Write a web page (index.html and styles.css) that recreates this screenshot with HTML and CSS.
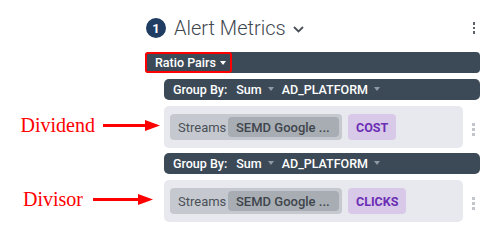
FILE: index.html
```html
<!DOCTYPE html>
<html lang="en">
<head>
  <meta charset="UTF-8" />
  <title>Alert Metrics</title>
  <link rel="stylesheet" href="styles.css">
</head>
<body>
  <div class="metrics">
    <div class="header">
      <span class="step">1</span>
      <span class="title">Alert Metrics</span>
      <svg class="chevron" width="11" height="7" viewBox="0 0 11 7"><path d="M1 1l4.5 4.5L10 1" fill="none" stroke="#4a5058" stroke-width="1.8"/></svg>
      <span class="kebab dark"><i></i><i></i><i></i></span>
    </div>

    <div class="ratio-bar">
      <span class="ratio-btn">Ratio Pairs <span class="caret white"></span></span>
    </div>

    <div class="pair">
      <div class="group-bar">
        <span class="label">Group By:</span>
        <span class="opt">Sum</span><span class="caret"></span>
        <span class="opt">AD_PLATFORM</span><span class="caret"></span>
      </div>
      <div class="query-row">
        <div class="query">
          <div class="note dividend">
            <span>Dividend</span>
            <svg width="57" height="12" viewBox="0 0 57 12"><path d="M0 6h43" stroke="#f00" stroke-width="3"/><path d="M42 0.5L57 6 42 11.5z" fill="#f00"/></svg>
          </div>
          <span class="stream">Streams <span class="source">SEMD Google ...</span></span>
          <span class="field">COST</span>
        </div>
        <span class="kebab"><i></i><i></i><i></i></span>
      </div>
    </div>

    <div class="pair">
      <div class="group-bar">
        <span class="label">Group By:</span>
        <span class="opt">Sum</span><span class="caret"></span>
        <span class="opt">AD_PLATFORM</span><span class="caret"></span>
      </div>
      <div class="query-row">
        <div class="query">
          <div class="note divisor">
            <span>Divisor</span>
            <svg width="60" height="12" viewBox="0 0 60 12"><path d="M0 6h46" stroke="#f00" stroke-width="3"/><path d="M45 0.5L60 6 45 11.5z" fill="#f00"/></svg>
          </div>
          <span class="stream">Streams <span class="source">SEMD Google ...</span></span>
          <span class="field">CLICKS</span>
        </div>
        <span class="kebab"><i></i><i></i><i></i></span>
      </div>
    </div>
  </div>
</body>
</html>
```

FILE: styles.css
```css
body {
  margin: 0;
  background: #fff;
  font-family: Roboto, "Liberation Sans", sans-serif;
}
.metrics {
  margin-left: 145px;
  width: 335px;
  padding-top: 17px;
}
.header {
  display: flex;
  align-items: center;
  height: 22px;
}
.step {
  width: 20px;
  height: 20px;
  border-radius: 50%;
  background: #1f3d63;
  color: #fff;
  font-size: 13px;
  font-weight: 700;
  display: flex;
  align-items: center;
  justify-content: center;
  margin-left: 1px;
}
.title {
  font-size: 20px;
  font-weight: 300;
  color: #41474f;
  margin-left: 8px;
}
.chevron { margin-left: 7px; margin-top: 2px; }
.kebab {
  margin-left: auto;
  margin-right: 5px;
  display: flex;
  flex-direction: column;
  gap: 2px;
}
.kebab i {
  display: block;
  width: 3px;
  height: 3px;
  background: #c2c6cb;
}
.kebab.dark i { background: #5b626a; width: 2.5px; height: 2.5px; }

.ratio-bar {
  margin-top: 13px;
  height: 21px;
  background: #3c4a57;
  border-radius: 4px;
  display: flex;
}
.ratio-btn {
  box-sizing: border-box;
  width: 87px;
  border: 2px solid #f00;
  border-radius: 3px;
  color: #fff;
  font-size: 12.5px;
  font-weight: 500;
  white-space: nowrap;
  display: flex;
  align-items: center;
  padding-left: 8px;
  gap: 4px;
}
.caret {
  width: 0;
  height: 0;
  border-left: 3.5px solid transparent;
  border-right: 3.5px solid transparent;
  border-top: 4px solid #8f9aa5;
  margin: -2px 8px 0 6px;
}
.caret.white { border-top-color: #fff; margin: 0; }

.pair {
  margin-left: 19px;
  margin-top: 6px;
}
.pair + .pair { margin-top: 5px; }
.group-bar {
  height: 21px;
  background: #3c4a57;
  border-radius: 5px;
  display: flex;
  align-items: center;
  padding-left: 9px;
  color: #fff;
  font-size: 12.5px;
  font-weight: 500;
  white-space: nowrap;
}
.group-bar .label { margin-right: 9px; }
.query-row {
  display: flex;
  align-items: center;
  margin-top: 6px;
}
.query {
  position: relative;
  box-sizing: border-box;
  width: 299px;
  height: 42px;
  background: #e8e9ee;
  border-radius: 5px;
  display: flex;
  align-items: center;
  padding-left: 6px;
  gap: 6px;
}
.query-row .kebab { margin-top: 4px; }
.stream {
  box-sizing: border-box;
  width: 172px;
  height: 26px;
  background: #c5c9cf;
  border-radius: 4px;
  display: flex;
  align-items: center;
  justify-content: space-between;
  padding: 0 3px 0 8px;
  font-size: 13px;
  color: #4a5058;
  white-space: nowrap;
}
.source {
  box-sizing: border-box;
  width: 111px;
  height: 20px;
  background: #a8adb4;
  border-radius: 4px;
  display: flex;
  align-items: center;
  padding-left: 8px;
  font-weight: 500;
  color: #3f454c;
}
.field {
  height: 26px;
  background: #d8c9e8;
  border-radius: 4px;
  display: flex;
  align-items: center;
  padding: 0 8px;
  font-size: 12.5px;
  font-weight: 700;
  color: #6a2db4;
}
.note {
  position: absolute;
  top: 50%;
  transform: translateY(-50%);
  display: flex;
  align-items: center;
  font-family: "Liberation Serif", serif;
  font-size: 20px;
  color: #f00;
  white-space: nowrap;
}
.dividend { right: calc(100% + 4px); gap: 8px; margin-top: -2px; }
.divisor { right: calc(100% + 11px); gap: 10px; margin-top: -2px; }
```
